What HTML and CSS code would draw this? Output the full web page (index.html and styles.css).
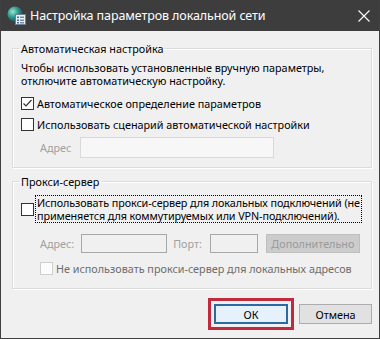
FILE: index.html
```html
<!DOCTYPE html>
<html lang="ru">
<head>
  <meta charset="UTF-8" />
  <title>Настройка параметров локальной сети</title>
  <link rel="stylesheet" href="styles.css">
</head>
<body>
  <div class="window">
    <div class="titlebar">
      <svg class="app-icon" width="20" height="20" viewBox="0 0 20 20">
        <defs>
          <radialGradient id="globe" cx="0.35" cy="0.35" r="0.7">
            <stop offset="0" stop-color="#9fe3d6" />
            <stop offset="0.5" stop-color="#2f9c8c" />
            <stop offset="1" stop-color="#14506a" />
          </radialGradient>
        </defs>
        <circle cx="8" cy="8" r="7.5" fill="url(#globe)" />
        <rect x="8.5" y="8.5" width="10" height="10" fill="#e9eef4" stroke="#6f7f92" />
        <rect x="10" y="10.5" width="2" height="1.5" fill="#3c6ea8" />
        <rect x="13" y="10.5" width="4" height="1.5" fill="#7b8896" />
        <rect x="10" y="13.5" width="2" height="1.5" fill="#3c6ea8" />
        <rect x="13" y="13.5" width="4" height="1.5" fill="#7b8896" />
        <rect x="10" y="16" width="2" height="1.5" fill="#3c6ea8" />
        <rect x="13" y="16" width="4" height="1.5" fill="#7b8896" />
      </svg>
      <span class="title">Настройка параметров локальной сети</span>
      <svg class="close-icon" width="12" height="12" viewBox="0 0 12 12">
        <path d="M0.5 0.5 L11.5 11.5 M11.5 0.5 L0.5 11.5" stroke="#ffffff" stroke-width="1.1" />
      </svg>
    </div>

    <div class="content">
      <fieldset class="group">
        <legend>Автоматическая настройка</legend>
        <p class="hint">Чтобы использовать установленные вручную параметры,<br />отключите автоматическую настройку.</p>

        <div class="check-row">
          <span class="box checked">
            <svg width="11" height="11" viewBox="0 0 11 11">
              <path d="M1.5 5.5 L4 8 L9.5 2" fill="none" stroke="#333333" stroke-width="1.2" />
            </svg>
          </span>
          <span class="check-label">Автоматическое определение параметров</span>
        </div>

        <div class="check-row">
          <span class="box"></span>
          <span class="check-label">Использовать сценарий автоматической настройки</span>
        </div>

        <div class="field-row addr-row">
          <span class="muted addr-label">Адрес</span>
          <span class="input wide-input"></span>
        </div>
      </fieldset>

      <fieldset class="group proxy">
        <legend>Прокси-сервер</legend>

        <div class="check-row proxy-row">
          <span class="box"></span>
          <span class="check-label focused">Использовать прокси-сервер для локальных подключений (не<br />применяется для коммутируемых или VPN-подключений).</span>
        </div>

        <div class="field-row proxy-fields">
          <span class="muted proxy-addr">Адрес:</span>
          <span class="input addr-input"></span>
          <span class="muted port-label">Порт:</span>
          <span class="input port-input"></span>
          <span class="btn disabled-btn">Дополнительно</span>
        </div>

        <div class="check-row bypass-row">
          <span class="box disabled"></span>
          <span class="check-label dim">Не использовать прокси-сервер для локальных адресов</span>
        </div>
      </fieldset>

      <div class="buttons">
        <span class="btn ok-btn">ОК</span>
        <span class="btn">Отмена</span>
      </div>
    </div>
  </div>
</body>
</html>
```

FILE: styles.css
```css
html, body {
  margin: 0;
  padding: 0;
  background: #f0f0f0;
}

body {
  font-family: 'Noto Sans', 'Open Sans', sans-serif;
  font-size: 10.8px;
  color: #000;
}

.window {
  width: 380px;
  height: 339px;
  box-sizing: border-box;
  border: 1px solid #404040;
  border-top: none;
  background: #f0f0f0;
  overflow: hidden;
}

.titlebar {
  height: 31px;
  margin: 0 -1px;
  background: #3d3d3d;
  display: flex;
  align-items: center;
  color: #fff;
}

.app-icon {
  margin-left: 7px;
  margin-top: 1px;
}

.title {
  margin-left: 3px;
  font-size: 12.5px;
  letter-spacing: -0.1px;
}

.close-icon {
  margin-left: auto;
  margin-right: 10px;
}

.content {
  padding: 10px 7px 0 11px;
}

.group {
  margin: 0;
  padding: 0 8px 9px 8px;
  border: 1px solid #dcdcdc;
  box-shadow: 1px 1px 0 #fff, inset 1px 1px 0 #fff;
}

.group legend {
  padding: 0 2px;
  margin-left: -2px;
  line-height: 15px;
}

.proxy {
  margin-top: 6px;
  padding-bottom: 10px;
}

.hint {
  margin: 5px 0 0;
  line-height: 13px;
  white-space: nowrap;
}

.check-row {
  display: flex;
  align-items: center;
  height: 20px;
}

.check-row + .check-row {
  margin-top: 1px;
}

.hint + .check-row {
  margin-top: 6px;
}

.box {
  width: 11px;
  height: 11px;
  border: 1px solid #333;
  background: #fff;
  display: flex;
  align-items: center;
  justify-content: center;
  flex-shrink: 0;
}

.box.disabled {
  border-color: #cfcfcf;
  background: #fcfcfc;
}

.check-label {
  margin-left: 3px;
  line-height: 13px;
  white-space: nowrap;
}

.dim {
  color: #6d6d6d;
}

.focused {
  outline: 1px dotted #000;
  padding: 0 1px;
  margin-left: 2px;
  letter-spacing: -0.1px;
}

.proxy-row {
  height: auto;
  margin-top: 7px;
}

.bypass-row {
  margin-top: 5px;
  padding-left: 19px;
}

.field-row {
  display: flex;
  align-items: center;
}

.muted {
  color: #a0a0a0;
}

.addr-row {
  margin-top: 3px;
  padding-left: 19px;
}

.input {
  box-sizing: border-box;
  height: 21px;
  border: 1px solid #d9d9d9;
  background: #f7f7f7;
}

.wide-input {
  width: 194px;
  margin-left: 9px;
}

.proxy-fields {
  margin-top: 12px;
  padding-left: 19px;
}

.proxy-fields .input {
  height: 19px;
  border-color: #a7a7a7;
  background: #f0f0f0;
}

.addr-input {
  width: 86px;
  margin-left: 7px;
}

.port-label {
  margin-left: 6px;
}

.port-input {
  width: 48px;
  margin-left: 8px;
}

.btn {
  box-sizing: border-box;
  height: 20px;
  width: 73px;
  display: flex;
  align-items: center;
  justify-content: center;
  background: #e1e1e1;
  border: 1px solid #adadad;
}

.disabled-btn {
  width: 94px;
  height: 19px;
  margin-left: 8px;
  background: #cccccc;
  border-color: #bfbfbf;
  color: #9a9a9a;
}

.buttons {
  display: flex;
  justify-content: flex-end;
  gap: 11px;
  margin-top: 15px;
}

.ok-btn {
  width: 74px;
  background: #e5f1fb;
  border: 2px solid #2b6aa3;
  outline: 3px solid #c12a3c;
  outline-offset: 3px;
}
```
